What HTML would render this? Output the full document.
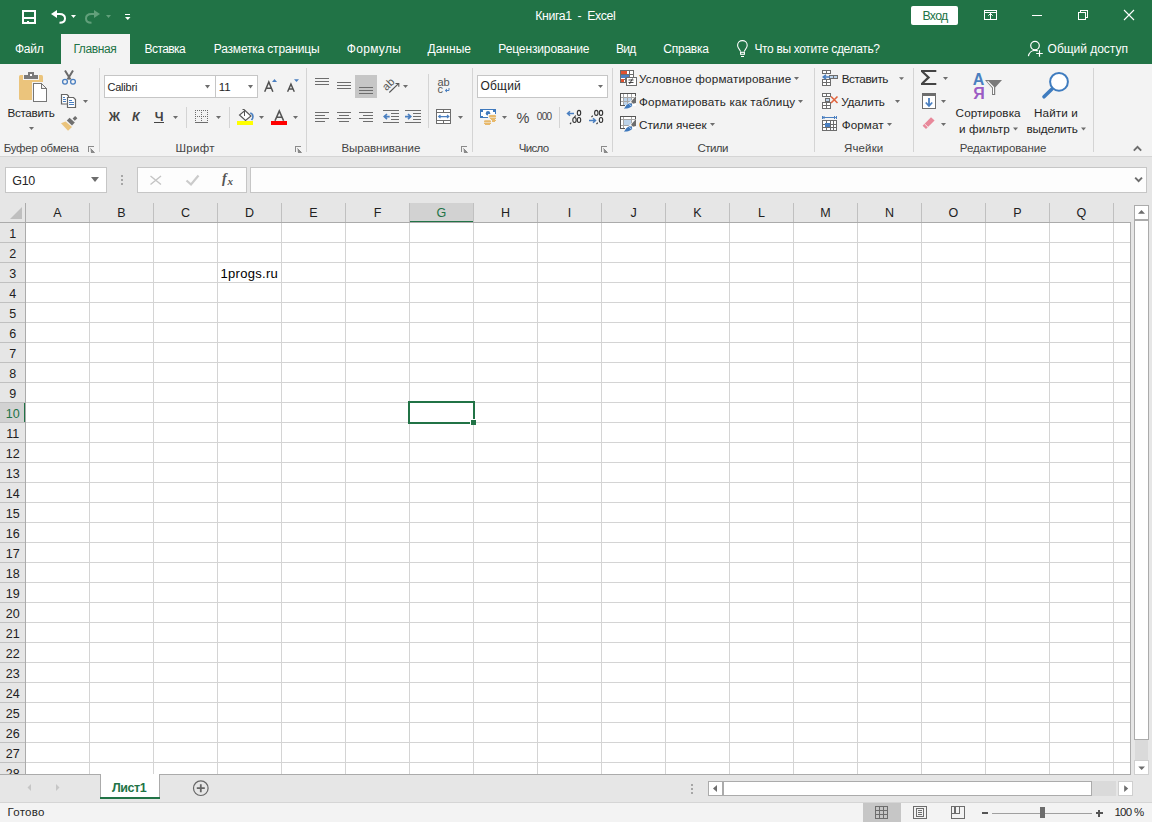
<!DOCTYPE html>
<html><head><meta charset="utf-8"><style>
html,body{margin:0;padding:0;}
body{width:1152px;height:822px;overflow:hidden;position:relative;background:#fff;font-family:"Liberation Sans",sans-serif;}
span{position:absolute;white-space:pre;font-family:"Liberation Sans",sans-serif;}
svg{position:absolute;left:0;top:0;}
</style></head><body>
<div style="position:absolute;left:0px;top:0px;width:1152px;height:64px;background:#217346;"></div><div style="position:absolute;left:0px;top:64px;width:1152px;height:92px;background:#f3f3f3;"></div><div style="position:absolute;left:61px;top:34px;width:69px;height:30px;background:#f3f3f3;"></div><div style="position:absolute;left:0px;top:156px;width:1152px;height:1px;background:#d5d5d5;"></div><div style="position:absolute;left:0px;top:157px;width:1152px;height:46px;background:#e6e6e6;"></div><div style="position:absolute;left:0px;top:203px;width:1131px;height:571px;background:#ffffff;"></div><div style="position:absolute;left:1131px;top:203px;width:21px;height:571px;background:#e6e6e6;"></div><div style="position:absolute;left:0px;top:774px;width:1152px;height:28px;background:#e6e6e6;"></div><div style="position:absolute;left:0px;top:803px;width:1152px;height:19px;background:#f3f3f3;"></div><div style="position:absolute;left:0px;top:203px;width:1131px;height:19px;background:#e6e6e6;"></div><div style="position:absolute;left:0px;top:223px;width:25px;height:551px;background:#e6e6e6;"></div><div style="position:absolute;left:409px;top:203px;width:64px;height:19px;background:#d2d2d2;"></div><div style="position:absolute;left:0px;top:402px;width:24px;height:20px;background:#d2d2d2;"></div><div style="position:absolute;left:409px;top:221px;width:65px;height:2px;background:#217346;"></div><div style="position:absolute;left:24px;top:402px;width:2px;height:21px;background:#217346;"></div><div style="position:absolute;left:5px;top:167px;width:102px;height:26px;background:#fff;box-sizing:border-box;border:1px solid #c6c6c6;"></div><div style="position:absolute;left:121px;top:175px;width:2px;height:2px;background:#a6a6a6;"></div><div style="position:absolute;left:121px;top:179px;width:2px;height:2px;background:#a6a6a6;"></div><div style="position:absolute;left:121px;top:183px;width:2px;height:2px;background:#a6a6a6;"></div><div style="position:absolute;left:137px;top:167px;width:110px;height:26px;background:#fdfdfd;box-sizing:border-box;border:1px solid #c6c6c6;"></div><div style="position:absolute;left:250px;top:167px;width:897px;height:26px;background:#fdfdfd;box-sizing:border-box;border:1px solid #c6c6c6;"></div><div style="position:absolute;left:0px;top:802px;width:1152px;height:1px;background:#d5d5d5;"></div><div style="position:absolute;left:100px;top:774px;width:60px;height:23px;background:#ababab;"></div><div style="position:absolute;left:101px;top:774px;width:58px;height:23px;background:#fff;"></div><div style="position:absolute;left:100px;top:797px;width:60px;height:2px;background:#217346;"></div><div style="position:absolute;left:911px;top:6px;width:47px;height:19px;background:#fff;border-radius:2px;"></div><div style="position:absolute;left:104px;top:75px;width:154px;height:23px;background:#fff;box-sizing:border-box;border:1px solid #c6c6c6;"></div><div style="position:absolute;left:215px;top:75px;width:1px;height:23px;background:#c6c6c6;"></div><div style="position:absolute;left:477px;top:75px;width:131px;height:23px;background:#fff;box-sizing:border-box;border:1px solid #c6c6c6;"></div>
<svg width="1152" height="822" viewBox="0 0 1152 822" shape-rendering="crispEdges">
<line x1="89.5" y1="223" x2="89.5" y2="774" stroke="#d4d4d4" stroke-width="1"/><line x1="153.5" y1="223" x2="153.5" y2="774" stroke="#d4d4d4" stroke-width="1"/><line x1="217.5" y1="223" x2="217.5" y2="774" stroke="#d4d4d4" stroke-width="1"/><line x1="281.5" y1="223" x2="281.5" y2="774" stroke="#d4d4d4" stroke-width="1"/><line x1="345.5" y1="223" x2="345.5" y2="774" stroke="#d4d4d4" stroke-width="1"/><line x1="409.5" y1="223" x2="409.5" y2="774" stroke="#d4d4d4" stroke-width="1"/><line x1="473.5" y1="223" x2="473.5" y2="774" stroke="#d4d4d4" stroke-width="1"/><line x1="537.5" y1="223" x2="537.5" y2="774" stroke="#d4d4d4" stroke-width="1"/><line x1="601.5" y1="223" x2="601.5" y2="774" stroke="#d4d4d4" stroke-width="1"/><line x1="665.5" y1="223" x2="665.5" y2="774" stroke="#d4d4d4" stroke-width="1"/><line x1="729.5" y1="223" x2="729.5" y2="774" stroke="#d4d4d4" stroke-width="1"/><line x1="793.5" y1="223" x2="793.5" y2="774" stroke="#d4d4d4" stroke-width="1"/><line x1="857.5" y1="223" x2="857.5" y2="774" stroke="#d4d4d4" stroke-width="1"/><line x1="921.5" y1="223" x2="921.5" y2="774" stroke="#d4d4d4" stroke-width="1"/><line x1="985.5" y1="223" x2="985.5" y2="774" stroke="#d4d4d4" stroke-width="1"/><line x1="1049.5" y1="223" x2="1049.5" y2="774" stroke="#d4d4d4" stroke-width="1"/><line x1="1113.5" y1="223" x2="1113.5" y2="774" stroke="#d4d4d4" stroke-width="1"/><line x1="26" y1="242.5" x2="1130" y2="242.5" stroke="#d4d4d4" stroke-width="1"/><line x1="26" y1="262.5" x2="1130" y2="262.5" stroke="#d4d4d4" stroke-width="1"/><line x1="26" y1="282.5" x2="1130" y2="282.5" stroke="#d4d4d4" stroke-width="1"/><line x1="26" y1="302.5" x2="1130" y2="302.5" stroke="#d4d4d4" stroke-width="1"/><line x1="26" y1="322.5" x2="1130" y2="322.5" stroke="#d4d4d4" stroke-width="1"/><line x1="26" y1="342.5" x2="1130" y2="342.5" stroke="#d4d4d4" stroke-width="1"/><line x1="26" y1="362.5" x2="1130" y2="362.5" stroke="#d4d4d4" stroke-width="1"/><line x1="26" y1="382.5" x2="1130" y2="382.5" stroke="#d4d4d4" stroke-width="1"/><line x1="26" y1="402.5" x2="1130" y2="402.5" stroke="#d4d4d4" stroke-width="1"/><line x1="26" y1="422.5" x2="1130" y2="422.5" stroke="#d4d4d4" stroke-width="1"/><line x1="26" y1="442.5" x2="1130" y2="442.5" stroke="#d4d4d4" stroke-width="1"/><line x1="26" y1="462.5" x2="1130" y2="462.5" stroke="#d4d4d4" stroke-width="1"/><line x1="26" y1="482.5" x2="1130" y2="482.5" stroke="#d4d4d4" stroke-width="1"/><line x1="26" y1="502.5" x2="1130" y2="502.5" stroke="#d4d4d4" stroke-width="1"/><line x1="26" y1="522.5" x2="1130" y2="522.5" stroke="#d4d4d4" stroke-width="1"/><line x1="26" y1="542.5" x2="1130" y2="542.5" stroke="#d4d4d4" stroke-width="1"/><line x1="26" y1="562.5" x2="1130" y2="562.5" stroke="#d4d4d4" stroke-width="1"/><line x1="26" y1="582.5" x2="1130" y2="582.5" stroke="#d4d4d4" stroke-width="1"/><line x1="26" y1="602.5" x2="1130" y2="602.5" stroke="#d4d4d4" stroke-width="1"/><line x1="26" y1="622.5" x2="1130" y2="622.5" stroke="#d4d4d4" stroke-width="1"/><line x1="26" y1="642.5" x2="1130" y2="642.5" stroke="#d4d4d4" stroke-width="1"/><line x1="26" y1="662.5" x2="1130" y2="662.5" stroke="#d4d4d4" stroke-width="1"/><line x1="26" y1="682.5" x2="1130" y2="682.5" stroke="#d4d4d4" stroke-width="1"/><line x1="26" y1="702.5" x2="1130" y2="702.5" stroke="#d4d4d4" stroke-width="1"/><line x1="26" y1="722.5" x2="1130" y2="722.5" stroke="#d4d4d4" stroke-width="1"/><line x1="26" y1="742.5" x2="1130" y2="742.5" stroke="#d4d4d4" stroke-width="1"/><line x1="26" y1="762.5" x2="1130" y2="762.5" stroke="#d4d4d4" stroke-width="1"/><line x1="89.5" y1="203" x2="89.5" y2="222" stroke="#c0c0c0" stroke-width="1"/><line x1="153.5" y1="203" x2="153.5" y2="222" stroke="#c0c0c0" stroke-width="1"/><line x1="217.5" y1="203" x2="217.5" y2="222" stroke="#c0c0c0" stroke-width="1"/><line x1="281.5" y1="203" x2="281.5" y2="222" stroke="#c0c0c0" stroke-width="1"/><line x1="345.5" y1="203" x2="345.5" y2="222" stroke="#c0c0c0" stroke-width="1"/><line x1="409.5" y1="203" x2="409.5" y2="222" stroke="#c0c0c0" stroke-width="1"/><line x1="473.5" y1="203" x2="473.5" y2="222" stroke="#c0c0c0" stroke-width="1"/><line x1="537.5" y1="203" x2="537.5" y2="222" stroke="#c0c0c0" stroke-width="1"/><line x1="601.5" y1="203" x2="601.5" y2="222" stroke="#c0c0c0" stroke-width="1"/><line x1="665.5" y1="203" x2="665.5" y2="222" stroke="#c0c0c0" stroke-width="1"/><line x1="729.5" y1="203" x2="729.5" y2="222" stroke="#c0c0c0" stroke-width="1"/><line x1="793.5" y1="203" x2="793.5" y2="222" stroke="#c0c0c0" stroke-width="1"/><line x1="857.5" y1="203" x2="857.5" y2="222" stroke="#c0c0c0" stroke-width="1"/><line x1="921.5" y1="203" x2="921.5" y2="222" stroke="#c0c0c0" stroke-width="1"/><line x1="985.5" y1="203" x2="985.5" y2="222" stroke="#c0c0c0" stroke-width="1"/><line x1="1049.5" y1="203" x2="1049.5" y2="222" stroke="#c0c0c0" stroke-width="1"/><line x1="1113.5" y1="203" x2="1113.5" y2="222" stroke="#c0c0c0" stroke-width="1"/><line x1="0" y1="242.5" x2="25" y2="242.5" stroke="#c0c0c0" stroke-width="1"/><line x1="0" y1="262.5" x2="25" y2="262.5" stroke="#c0c0c0" stroke-width="1"/><line x1="0" y1="282.5" x2="25" y2="282.5" stroke="#c0c0c0" stroke-width="1"/><line x1="0" y1="302.5" x2="25" y2="302.5" stroke="#c0c0c0" stroke-width="1"/><line x1="0" y1="322.5" x2="25" y2="322.5" stroke="#c0c0c0" stroke-width="1"/><line x1="0" y1="342.5" x2="25" y2="342.5" stroke="#c0c0c0" stroke-width="1"/><line x1="0" y1="362.5" x2="25" y2="362.5" stroke="#c0c0c0" stroke-width="1"/><line x1="0" y1="382.5" x2="25" y2="382.5" stroke="#c0c0c0" stroke-width="1"/><line x1="0" y1="402.5" x2="25" y2="402.5" stroke="#c0c0c0" stroke-width="1"/><line x1="0" y1="422.5" x2="25" y2="422.5" stroke="#c0c0c0" stroke-width="1"/><line x1="0" y1="442.5" x2="25" y2="442.5" stroke="#c0c0c0" stroke-width="1"/><line x1="0" y1="462.5" x2="25" y2="462.5" stroke="#c0c0c0" stroke-width="1"/><line x1="0" y1="482.5" x2="25" y2="482.5" stroke="#c0c0c0" stroke-width="1"/><line x1="0" y1="502.5" x2="25" y2="502.5" stroke="#c0c0c0" stroke-width="1"/><line x1="0" y1="522.5" x2="25" y2="522.5" stroke="#c0c0c0" stroke-width="1"/><line x1="0" y1="542.5" x2="25" y2="542.5" stroke="#c0c0c0" stroke-width="1"/><line x1="0" y1="562.5" x2="25" y2="562.5" stroke="#c0c0c0" stroke-width="1"/><line x1="0" y1="582.5" x2="25" y2="582.5" stroke="#c0c0c0" stroke-width="1"/><line x1="0" y1="602.5" x2="25" y2="602.5" stroke="#c0c0c0" stroke-width="1"/><line x1="0" y1="622.5" x2="25" y2="622.5" stroke="#c0c0c0" stroke-width="1"/><line x1="0" y1="642.5" x2="25" y2="642.5" stroke="#c0c0c0" stroke-width="1"/><line x1="0" y1="662.5" x2="25" y2="662.5" stroke="#c0c0c0" stroke-width="1"/><line x1="0" y1="682.5" x2="25" y2="682.5" stroke="#c0c0c0" stroke-width="1"/><line x1="0" y1="702.5" x2="25" y2="702.5" stroke="#c0c0c0" stroke-width="1"/><line x1="0" y1="722.5" x2="25" y2="722.5" stroke="#c0c0c0" stroke-width="1"/><line x1="0" y1="742.5" x2="25" y2="742.5" stroke="#c0c0c0" stroke-width="1"/><line x1="0" y1="762.5" x2="25" y2="762.5" stroke="#c0c0c0" stroke-width="1"/><line x1="0" y1="222.5" x2="1131" y2="222.5" stroke="#ababab" stroke-width="1"/><line x1="25.5" y1="203" x2="25.5" y2="774" stroke="#ababab" stroke-width="1"/><line x1="1130.5" y1="222" x2="1130.5" y2="774" stroke="#ababab" stroke-width="1"/><polygon points="22,207 22,219 10,219" fill="#bfbfbf" shape-rendering="geometricPrecision"/><rect x="409" y="402" width="65" height="21" fill="none" stroke="#217346" stroke-width="2" /><rect x="470" y="419" width="6" height="6" fill="#fff"/><rect x="471" y="420" width="5" height="5" fill="#217346"/><polygon points="91,177 99,177 95,182" fill="#6d6d6d" shape-rendering="geometricPrecision"/><path d="M150.5,176 L161,184.5 M161,176 L150.5,184.5" stroke="#c4c4c4" stroke-width="1.4" fill="none" shape-rendering="geometricPrecision"/><path d="M186.5,180.5 L191,184.5 L198.5,175.5" stroke="#cbcbcb" stroke-width="2.2" fill="none" shape-rendering="geometricPrecision"/><path d="M1135.2,177.6 L1138.6,181.2 L1142,177.6" stroke="#6d6d6d" stroke-width="1.9" fill="none" shape-rendering="geometricPrecision"/><line x1="0" y1="774.5" x2="101" y2="774.5" stroke="#ababab" stroke-width="1"/><line x1="159" y1="774.5" x2="1131" y2="774.5" stroke="#ababab" stroke-width="1"/><polygon points="31,784 31,791 27.5,787.5" fill="#c6c6c6" shape-rendering="geometricPrecision"/><polygon points="56,784 56,791 59.5,787.5" fill="#c6c6c6" shape-rendering="geometricPrecision"/><circle cx="200.8" cy="788.2" r="7.3" fill="none" stroke="#666" stroke-width="1.2" shape-rendering="geometricPrecision"/><path d="M196.8,788.2 H204.8 M200.8,784.2 V792.2" stroke="#666" stroke-width="1.8" shape-rendering="geometricPrecision"/><path d="M23,11 H35 V23 H23 Z" fill="none" stroke="#fff" stroke-width="2" shape-rendering="geometricPrecision"/><path d="M24,18 H34" stroke="#fff" stroke-width="2" shape-rendering="geometricPrecision"/><rect x="27" y="21" width="2" height="2" fill="#fff"/><polygon points="51,14 57,10 57,18" fill="#fff" shape-rendering="geometricPrecision"/><path d="M55.5,14 H59.5 C63,14 65,16 65,18.5 C65,21 63,22.8 59.5,22.8" fill="none" stroke="#fff" stroke-width="2" shape-rendering="geometricPrecision"/><polygon points="71,15 76,15 73.5,18" fill="#fff" shape-rendering="geometricPrecision"/><polygon points="100,14 94,10 94,18" fill="#62a07b" shape-rendering="geometricPrecision"/><path d="M95.5,14 H91.5 C88,14 86,16 86,18.5 C86,21 88,22.8 91.5,22.8" fill="none" stroke="#62a07b" stroke-width="2" shape-rendering="geometricPrecision"/><polygon points="106,15 111,15 108.5,18" fill="#62a07b" shape-rendering="geometricPrecision"/><rect x="125" y="13.5" width="5" height="1.5" fill="#fff"/><polygon points="125,17 130.5,17 127.75,20" fill="#fff" shape-rendering="geometricPrecision"/><rect x="984.5" y="10.5" width="12" height="9" fill="none" stroke="#fff" stroke-width="1"/><path d="M985,12.5 H996 M990.5,13 V20" stroke="#fff" stroke-width="1"/><path d="M988.3,15.7 L990.5,13.5 L992.7,15.7" fill="none" stroke="#fff" stroke-width="1" shape-rendering="geometricPrecision"/><rect x="1032" y="15" width="10" height="1" fill="#fff"/><rect x="1078.5" y="12.5" width="7" height="7" fill="none" stroke="#fff"/><path d="M1080.5,12.5 V10.5 H1087.5 V17.5 H1085.5" fill="none" stroke="#fff"/><path d="M1124,10 L1134,20 M1134,10 L1124,20" stroke="#fff" stroke-width="1.1" shape-rendering="geometricPrecision"/><circle cx="1035" cy="45.6" r="4.3" fill="none" stroke="#fff" stroke-width="1.2" shape-rendering="geometricPrecision"/><path d="M1028.4,56.2 C1029,52.5 1032,50.3 1035,50.3 C1036,50.3 1037,50.5 1037.8,50.9" fill="none" stroke="#fff" stroke-width="1.2" shape-rendering="geometricPrecision"/><path d="M1036.2,53.5 H1042.8 M1039.5,50.2 V56.8" stroke="#fff" stroke-width="1.2" shape-rendering="geometricPrecision"/><path d="M740.6,51.6 L739,48.8 C738,47.6 737.6,46.5 737.6,45.2 C737.6,42.6 739.7,40.6 742.4,40.6 C745.1,40.6 747.2,42.6 747.2,45.2 C747.2,46.5 746.8,47.6 745.8,48.8 L744.2,51.6" fill="none" stroke="#fff" stroke-width="1.1" shape-rendering="geometricPrecision"/><rect x="740.6" y="52.3" width="3.8" height="2" fill="none" stroke="#fff" stroke-width="1.1" shape-rendering="geometricPrecision"/><rect x="741" y="56" width="3" height="1" fill="#fff"/><rect x="19" y="75" width="24" height="25" rx="1.5" fill="#ebc47c" shape-rendering="geometricPrecision"/><rect x="23" y="73" width="16" height="7" fill="#f3f3f3"/><rect x="24" y="75" width="14" height="4" fill="#7a7a7a"/><rect x="28" y="72" width="6" height="4" fill="#7a7a7a"/><rect x="30" y="74" width="2" height="2" fill="#fff"/><rect x="32" y="82" width="16" height="22" fill="#f3f3f3"/><path d="M33.5,83.5 H41.5 L46.5,88.5 V101.5 H33.5 Z" fill="#fff" stroke="#767676" stroke-width="1"/><path d="M41.5,83.5 V88.5 H46.5" fill="none" stroke="#767676" stroke-width="1"/><polygon points="41.5,84 46,88 41.5,88" fill="#f0f0f0"/><polygon points="29,127 34,127 31.5,130" fill="#6d6d6d" shape-rendering="geometricPrecision"/><path d="M65,70.5 L70.5,79.5 M73,70.5 L67.5,79.5" stroke="#6a6a6a" stroke-width="2" shape-rendering="geometricPrecision"/><circle cx="65" cy="81.8" r="2.4" fill="none" stroke="#4a7fc0" stroke-width="1.3" shape-rendering="geometricPrecision"/><circle cx="73" cy="81.8" r="2.4" fill="none" stroke="#4a7fc0" stroke-width="1.3" shape-rendering="geometricPrecision"/><path d="M61.5,94.5 H67 L68.5,96 V104 H61.5 Z" fill="#fff" stroke="#666" stroke-width="1.2" shape-rendering="geometricPrecision"/><path d="M67.5,97.5 H73.5 L75.5,99.5 V107.5 H67.5 Z" fill="#fff" stroke="#666" stroke-width="1.2" shape-rendering="geometricPrecision"/><rect x="63" y="96.8" width="2" height="1" fill="#4a7fc0"/><rect x="63" y="99.0" width="3" height="1" fill="#4a7fc0"/><rect x="63" y="100.9" width="3" height="1" fill="#4a7fc0"/><rect x="69" y="99.8" width="2.5" height="1" fill="#4a7fc0"/><rect x="69" y="102.0" width="5" height="1" fill="#4a7fc0"/><rect x="69" y="103.9" width="5" height="1" fill="#4a7fc0"/><polygon points="83,100 88,100 85.5,103" fill="#6d6d6d" shape-rendering="geometricPrecision"/><polygon points="61,123.2 65.6,121.4 72,127 68,130.7" fill="#ebc47c" shape-rendering="geometricPrecision"/><polygon points="66.8,120.6 69.6,117.8 74.8,122.6 72,125.4" fill="#6f6f6f" shape-rendering="geometricPrecision"/><polygon points="72.6,118.6 75.2,116 77.4,118.2 74.8,120.8" fill="#6f6f6f" shape-rendering="geometricPrecision"/><path d="M88.5,152 V146.5 H94" fill="none" stroke="#8a8a8a" stroke-width="1"/><polygon points="90.5,148.5 95,153 91,153" fill="#8a8a8a" shape-rendering="geometricPrecision"/><path d="M90.5,148.5 L94.5,152.5" stroke="#8a8a8a" stroke-width="1" shape-rendering="geometricPrecision"/><path d="M295.5,152 V146.5 H301" fill="none" stroke="#8a8a8a" stroke-width="1"/><polygon points="297.5,148.5 302,153 298,153" fill="#8a8a8a" shape-rendering="geometricPrecision"/><path d="M297.5,148.5 L301.5,152.5" stroke="#8a8a8a" stroke-width="1" shape-rendering="geometricPrecision"/><path d="M461.5,152 V146.5 H467" fill="none" stroke="#8a8a8a" stroke-width="1"/><polygon points="463.5,148.5 468,153 464,153" fill="#8a8a8a" shape-rendering="geometricPrecision"/><path d="M463.5,148.5 L467.5,152.5" stroke="#8a8a8a" stroke-width="1" shape-rendering="geometricPrecision"/><path d="M601.5,152 V146.5 H607" fill="none" stroke="#8a8a8a" stroke-width="1"/><polygon points="603.5,148.5 608,153 604,153" fill="#8a8a8a" shape-rendering="geometricPrecision"/><path d="M603.5,148.5 L607.5,152.5" stroke="#8a8a8a" stroke-width="1" shape-rendering="geometricPrecision"/><rect x="99" y="68" width="1" height="84" fill="#d4d4d4"/><rect x="306" y="68" width="1" height="84" fill="#d4d4d4"/><rect x="472" y="68" width="1" height="84" fill="#d4d4d4"/><rect x="612" y="68" width="1" height="84" fill="#d4d4d4"/><rect x="814" y="68" width="1" height="84" fill="#d4d4d4"/><rect x="913" y="68" width="1" height="84" fill="#d4d4d4"/><rect x="1093" y="68" width="1" height="84" fill="#d4d4d4"/><path d="M1133.8,150.6 L1137.5,146.9 L1141.2,150.6" fill="none" stroke="#6d6d6d" stroke-width="1.9" shape-rendering="geometricPrecision"/><polygon points="205,85 210,85 207.5,88.4" fill="#6d6d6d" shape-rendering="geometricPrecision"/><polygon points="248,85 253,85 250.5,88.4" fill="#6d6d6d" shape-rendering="geometricPrecision"/><path d="M264.7,91.8 L268.8,82 L272.9,91.8 M266.2,88.3 H271.4" fill="none" stroke="#505050" stroke-width="1.5" shape-rendering="geometricPrecision"/><polygon points="272,82 277,82 274.5,79" fill="#4a7fc0" shape-rendering="geometricPrecision"/><path d="M287.6,91.8 L290.95,84.1 L294.3,91.8 M288.9,89 H293" fill="none" stroke="#505050" stroke-width="1.4" shape-rendering="geometricPrecision"/><polygon points="294,79.2 299,79.2 296.5,82" fill="#4a7fc0" shape-rendering="geometricPrecision"/><rect x="154" y="122" width="10" height="1.2" fill="#444"/><polygon points="173,116 178,116 175.5,119" fill="#6d6d6d" shape-rendering="geometricPrecision"/><rect x="186" y="107" width="1" height="21" fill="#d4d4d4"/><rect x="229" y="107" width="1" height="21" fill="#d4d4d4"/><rect x="195" y="110" width="1" height="1" fill="#6d6d6d"/><rect x="197" y="110" width="1" height="1" fill="#6d6d6d"/><rect x="199" y="110" width="1" height="1" fill="#6d6d6d"/><rect x="201" y="110" width="1" height="1" fill="#6d6d6d"/><rect x="203" y="110" width="1" height="1" fill="#6d6d6d"/><rect x="205" y="110" width="1" height="1" fill="#6d6d6d"/><rect x="207" y="110" width="1" height="1" fill="#6d6d6d"/><rect x="195" y="116" width="1" height="1" fill="#6d6d6d"/><rect x="197" y="116" width="1" height="1" fill="#6d6d6d"/><rect x="199" y="116" width="1" height="1" fill="#6d6d6d"/><rect x="201" y="116" width="1" height="1" fill="#6d6d6d"/><rect x="203" y="116" width="1" height="1" fill="#6d6d6d"/><rect x="205" y="116" width="1" height="1" fill="#6d6d6d"/><rect x="207" y="116" width="1" height="1" fill="#6d6d6d"/><rect x="195" y="110" width="1" height="1" fill="#6d6d6d"/><rect x="195" y="112" width="1" height="1" fill="#6d6d6d"/><rect x="195" y="114" width="1" height="1" fill="#6d6d6d"/><rect x="195" y="116" width="1" height="1" fill="#6d6d6d"/><rect x="195" y="118" width="1" height="1" fill="#6d6d6d"/><rect x="195" y="120" width="1" height="1" fill="#6d6d6d"/><rect x="201" y="110" width="1" height="1" fill="#6d6d6d"/><rect x="201" y="112" width="1" height="1" fill="#6d6d6d"/><rect x="201" y="114" width="1" height="1" fill="#6d6d6d"/><rect x="201" y="116" width="1" height="1" fill="#6d6d6d"/><rect x="201" y="118" width="1" height="1" fill="#6d6d6d"/><rect x="201" y="120" width="1" height="1" fill="#6d6d6d"/><rect x="207" y="110" width="1" height="1" fill="#6d6d6d"/><rect x="207" y="112" width="1" height="1" fill="#6d6d6d"/><rect x="207" y="114" width="1" height="1" fill="#6d6d6d"/><rect x="207" y="116" width="1" height="1" fill="#6d6d6d"/><rect x="207" y="118" width="1" height="1" fill="#6d6d6d"/><rect x="207" y="120" width="1" height="1" fill="#6d6d6d"/><rect x="195" y="122" width="13" height="1.2" fill="#6d6d6d"/><polygon points="216,116 221,116 218.5,119" fill="#6d6d6d" shape-rendering="geometricPrecision"/><polygon points="245,110.5 251,116 245.5,120.5 239.5,115" fill="#fff" stroke="#555" stroke-width="1.1" shape-rendering="geometricPrecision"/><path d="M242.5,109.5 H244.5 V116" fill="none" stroke="#555" stroke-width="1" shape-rendering="geometricPrecision"/><path d="M250.2,113 C252.5,113.5 253.6,115.5 252.6,118.5 L251.5,120" fill="none" stroke="#4a7fc0" stroke-width="1.6" shape-rendering="geometricPrecision"/><rect x="237" y="121" width="16" height="4" fill="#ffff00"/><polygon points="259,116 264,116 261.5,119" fill="#6d6d6d" shape-rendering="geometricPrecision"/><path d="M275,120.8 L279.3,111 L283.6,120.8 M276.6,117.2 H282" fill="none" stroke="#555" stroke-width="1.6" shape-rendering="geometricPrecision"/><rect x="271" y="121" width="16" height="4" fill="#ff0000"/><polygon points="293,116 298,116 295.5,119" fill="#6d6d6d" shape-rendering="geometricPrecision"/><rect x="315" y="77.5" width="14" height="1.1" fill="#6d6d6d"/><rect x="315" y="80.6" width="14" height="1.1" fill="#6d6d6d"/><rect x="315" y="83.8" width="14" height="1.1" fill="#6d6d6d"/><rect x="337" y="82" width="14" height="1.1" fill="#6d6d6d"/><rect x="337" y="85" width="14" height="1.1" fill="#6d6d6d"/><rect x="337" y="88.2" width="14" height="1.1" fill="#6d6d6d"/><rect x="355" y="75" width="22" height="23" fill="#c6c6c6"/><rect x="359" y="87" width="14" height="1.1" fill="#6d6d6d"/><rect x="359" y="90" width="14" height="1.1" fill="#6d6d6d"/><rect x="359" y="93.2" width="14" height="1.1" fill="#6d6d6d"/><path d="M389.3,92.5 L398.8,83.3" stroke="#555" stroke-width="1.1" shape-rendering="geometricPrecision"/><path d="M395.5,83.5 H398.8 V86.8" fill="none" stroke="#555" stroke-width="1.1" shape-rendering="geometricPrecision"/><polygon points="403,85 408,85 405.5,88" fill="#6d6d6d" shape-rendering="geometricPrecision"/><rect x="315" y="111.5" width="14" height="1.1" fill="#6d6d6d"/><rect x="337" y="111.5" width="14" height="1.1" fill="#6d6d6d"/><rect x="359" y="111.5" width="14" height="1.1" fill="#6d6d6d"/><rect x="315" y="114.6" width="10" height="1.1" fill="#6d6d6d"/><rect x="339" y="114.6" width="10" height="1.1" fill="#6d6d6d"/><rect x="363" y="114.6" width="10" height="1.1" fill="#6d6d6d"/><rect x="315" y="117.8" width="14" height="1.1" fill="#6d6d6d"/><rect x="337" y="117.8" width="14" height="1.1" fill="#6d6d6d"/><rect x="359" y="117.8" width="14" height="1.1" fill="#6d6d6d"/><rect x="315" y="121" width="10" height="1.1" fill="#6d6d6d"/><rect x="339" y="121" width="10" height="1.1" fill="#6d6d6d"/><rect x="363" y="121" width="10" height="1.1" fill="#6d6d6d"/><rect x="383" y="109.8" width="16" height="1.1" fill="#6d6d6d"/><rect x="405" y="109.8" width="16" height="1.1" fill="#6d6d6d"/><rect x="383" y="121.9" width="16" height="1.1" fill="#6d6d6d"/><rect x="405" y="121.9" width="16" height="1.1" fill="#6d6d6d"/><rect x="391" y="113" width="8" height="1.1" fill="#6d6d6d"/><rect x="413" y="113" width="8" height="1.1" fill="#6d6d6d"/><rect x="391" y="116.1" width="8" height="1.1" fill="#6d6d6d"/><rect x="413" y="116.1" width="8" height="1.1" fill="#6d6d6d"/><rect x="391" y="119" width="8" height="1.1" fill="#6d6d6d"/><rect x="413" y="119" width="8" height="1.1" fill="#6d6d6d"/><path d="M389.7,116.6 H384.5 M387,114 L384.2,116.6 L387,119.2" fill="none" stroke="#4a7fc0" stroke-width="1.6" shape-rendering="geometricPrecision"/><path d="M405,116.6 H410.5 M408,114 L410.8,116.6 L408,119.2" fill="none" stroke="#4a7fc0" stroke-width="1.6" shape-rendering="geometricPrecision"/><rect x="428" y="74" width="1" height="54" fill="#d4d4d4"/><path d="M449,88 V90.5 H445.5 M447,89 L445.2,90.5 L447,92" fill="none" stroke="#4a7fc0" stroke-width="1" shape-rendering="geometricPrecision"/><rect x="436.5" y="109.5" width="14" height="14" fill="#fff" stroke="#6d6d6d" stroke-width="1"/><path d="M437,112.5 H450 M437,120.5 H450 M443.5,110 V112.5 M443.5,120.5 V123" stroke="#6d6d6d" stroke-width="1"/><path d="M438.5,116.6 H449 M440.5,115 L438.6,116.6 L440.5,118.2 M447,115 L448.9,116.6 L447,118.2" fill="none" stroke="#4a7fc0" stroke-width="1.1" shape-rendering="geometricPrecision"/><polygon points="458,116 463,116 460.5,119" fill="#6d6d6d" shape-rendering="geometricPrecision"/><polygon points="598,85 603,85 600.5,88" fill="#6d6d6d" shape-rendering="geometricPrecision"/><rect x="480" y="109" width="16" height="9" fill="#3f79bd"/><polygon points="483,110 493,110 493,111.5 495,111.5 495,115.5 493,115.5 493,117 483,117 483,115.5 481,115.5 481,111.5 483,111.5" fill="#fff"/><circle cx="488" cy="113.3" r="2.2" fill="#3f79bd" shape-rendering="geometricPrecision"/><rect x="488" y="114" width="9" height="11" fill="#f3f3f3"/><rect x="489" y="115" width="7" height="2.6" rx="1.2" fill="#e8b96b" shape-rendering="geometricPrecision"/><rect x="489.5" y="118" width="6.5" height="0.9" fill="#e8b96b"/><rect x="491" y="119.2" width="4" height="1" fill="#e8b96b"/><rect x="489.5" y="120.3" width="6.5" height="0.9" fill="#e8b96b"/><rect x="491.5" y="121.4" width="3.5" height="1" fill="#e8b96b"/><rect x="483" y="119.5" width="9" height="6" fill="#f3f3f3"/><rect x="484" y="120.2" width="7" height="2.4" rx="1.2" fill="#e8b96b" shape-rendering="geometricPrecision"/><rect x="484.3" y="123.2" width="6.4" height="0.9" fill="#e8b96b"/><rect x="485" y="124.2" width="5" height="1" fill="#e8b96b"/><polygon points="502,116 507,116 504.5,119" fill="#6d6d6d" shape-rendering="geometricPrecision"/><rect x="559" y="107" width="1" height="21" fill="#d4d4d4"/><ellipse cx="579" cy="112.9" rx="1.7" ry="2.5" fill="none" stroke="#333" stroke-width="1.1" shape-rendering="geometricPrecision"/><ellipse cx="574.5" cy="120" rx="1.7" ry="2.5" fill="none" stroke="#333" stroke-width="1.1" shape-rendering="geometricPrecision"/><ellipse cx="579" cy="120" rx="1.7" ry="2.5" fill="none" stroke="#333" stroke-width="1.1" shape-rendering="geometricPrecision"/><path d="M571.2,122.6 L570,124.19999999999999" stroke="#333" stroke-width="1.1" shape-rendering="geometricPrecision"/><path d="M575.7,115.5 L574.5,117.1" stroke="#333" stroke-width="1.1" shape-rendering="geometricPrecision"/><path d="M574,113.5 H567.5 M570,111.2 L567.5,113.5 L570,115.8" fill="none" stroke="#4a7fc0" stroke-width="1.5" shape-rendering="geometricPrecision"/><ellipse cx="596.3" cy="112.9" rx="1.7" ry="2.5" fill="none" stroke="#333" stroke-width="1.1" shape-rendering="geometricPrecision"/><ellipse cx="601" cy="112.9" rx="1.7" ry="2.5" fill="none" stroke="#333" stroke-width="1.1" shape-rendering="geometricPrecision"/><path d="M592.7,115.6 L591.5,117.19999999999999" stroke="#333" stroke-width="1.1" shape-rendering="geometricPrecision"/><ellipse cx="601" cy="120" rx="1.7" ry="2.5" fill="none" stroke="#333" stroke-width="1.1" shape-rendering="geometricPrecision"/><path d="M597.7,122.6 L596.5,124.19999999999999" stroke="#333" stroke-width="1.1" shape-rendering="geometricPrecision"/><path d="M589,120.5 H595.5 M593,118.2 L595.5,120.5 L593,122.8" fill="none" stroke="#4a7fc0" stroke-width="1.5" shape-rendering="geometricPrecision"/><rect x="620.5" y="70.5" width="13" height="12" fill="#fff" stroke="#6d6d6d" stroke-width="1"/><rect x="625" y="70" width="1" height="13" fill="#6d6d6d"/><rect x="629" y="70" width="1" height="13" fill="#6d6d6d"/><rect x="620" y="74" width="14" height="1" fill="#6d6d6d"/><rect x="620" y="79" width="14" height="1" fill="#6d6d6d"/><rect x="621" y="71" width="6" height="3" fill="#e0522f"/><rect x="621" y="75" width="8" height="3" fill="#4a7fc0"/><rect x="621" y="79" width="3" height="3" fill="#e0522f"/><rect x="626.5" y="77" width="9.5" height="8.5" fill="#fff" stroke="#6d6d6d" stroke-width="1"/><path d="M628.5,80 H633.5 M628.5,82.5 H633.5 M632.5,78.5 L629.5,84" stroke="#333" stroke-width="0.9" shape-rendering="geometricPrecision"/><rect x="620" y="93" width="16" height="13" fill="#fff"/><rect x="624" y="98" width="7" height="7" fill="#bcd3ea"/><rect x="623" y="93" width="1" height="13" fill="#a6a6a6"/><rect x="627" y="93" width="1" height="13" fill="#a6a6a6"/><rect x="631" y="93" width="1" height="13" fill="#a6a6a6"/><rect x="620" y="97" width="16" height="1" fill="#a6a6a6"/><rect x="620" y="101" width="16" height="1" fill="#a6a6a6"/><path d="M620.5,106 V93.5 H635.5 V95.5" fill="none" stroke="#555" stroke-width="1"/><path d="M620.5,105.5 H624.5" fill="none" stroke="#555" stroke-width="1"/><polygon points="637,95 637,97 628,106.5 624.5,106.5" fill="#f3f3f3" shape-rendering="geometricPrecision"/><polygon points="636,96 636,103 633,103.7 631.2,101.4" fill="#6d6d6d" shape-rendering="geometricPrecision"/><path d="M624,108.7 C625.5,106 627,104 629,103.4 C631,102.9 632.6,104 632.2,105.6 C631.6,107.6 628,108.7 624,108.7 Z" fill="#3f79bd" shape-rendering="geometricPrecision"/><path d="M629.6,104.4 L631,105.8" stroke="#fff" stroke-width="0.9" shape-rendering="geometricPrecision"/><rect x="620" y="116" width="16" height="13" fill="#fff"/><rect x="624" y="120" width="7" height="5" fill="#bcd3ea"/><rect x="623" y="116" width="1" height="13" fill="#a6a6a6"/><rect x="631" y="116" width="1" height="13" fill="#a6a6a6"/><rect x="620" y="119" width="16" height="1" fill="#a6a6a6"/><rect x="620" y="125" width="16" height="1" fill="#a6a6a6"/><path d="M620.5,129 V116.5 H635.5 V118.5" fill="none" stroke="#555" stroke-width="1"/><path d="M620.5,128.5 H624.5" fill="none" stroke="#555" stroke-width="1"/><polygon points="637,118 637,120 628,129.5 624.5,129.5" fill="#f3f3f3" shape-rendering="geometricPrecision"/><polygon points="636,119 636,126 633,126.7 631.2,124.4" fill="#6d6d6d" shape-rendering="geometricPrecision"/><path d="M624,131.7 C625.5,129 627,127 629,126.4 C631,125.9 632.6,127 632.2,128.6 C631.6,130.6 628,131.7 624,131.7 Z" fill="#3f79bd" shape-rendering="geometricPrecision"/><path d="M629.6,127.4 L631,128.8" stroke="#fff" stroke-width="0.9" shape-rendering="geometricPrecision"/><polygon points="794,77 799,77 796.5,80" fill="#6d6d6d" shape-rendering="geometricPrecision"/><polygon points="798,100 803,100 800.5,103" fill="#6d6d6d" shape-rendering="geometricPrecision"/><polygon points="710,123 715,123 712.5,126" fill="#6d6d6d" shape-rendering="geometricPrecision"/><rect x="822.5" y="70.5" width="8" height="3" fill="#fff" stroke="#6d6d6d" stroke-width="1"/><rect x="826" y="70" width="1" height="4" fill="#6d6d6d"/><rect x="822" y="70" width="9" height="4" fill="none"/><rect x="829.5" y="75.5" width="8" height="3" fill="#bcd3ea" stroke="#6d6d6d" stroke-width="1"/><rect x="833" y="75" width="1" height="4" fill="#6d6d6d"/><rect x="822.5" y="79.5" width="8" height="6" fill="#fff" stroke="#6d6d6d" stroke-width="1"/><rect x="826" y="79" width="1" height="7" fill="#6d6d6d"/><rect x="822" y="82" width="9" height="1" fill="#6d6d6d"/><path d="M830,77 H823.5 M826,74.8 L823.2,77 L826,79.2" fill="none" stroke="#4a7fc0" stroke-width="1.5" shape-rendering="geometricPrecision"/><polygon points="899,77.2 904,77.2 901.5,80" fill="#6d6d6d" shape-rendering="geometricPrecision"/><rect x="822.5" y="93.5" width="8" height="3" fill="#fff" stroke="#6d6d6d" stroke-width="1"/><rect x="826" y="93" width="1" height="4" fill="#6d6d6d"/><rect x="825.5" y="98.5" width="4" height="3" fill="#bcd3ea" stroke="#6d6d6d" stroke-width="1"/><rect x="822.5" y="102.5" width="8" height="6" fill="#fff" stroke="#6d6d6d" stroke-width="1"/><rect x="826" y="102" width="1" height="7" fill="#6d6d6d"/><rect x="822" y="105" width="9" height="1" fill="#6d6d6d"/><path d="M831,96.5 L837.5,103 M837.5,96.5 L831,103" stroke="#e0653f" stroke-width="1.6" shape-rendering="geometricPrecision"/><polygon points="895,100 900,100 897.5,103" fill="#6d6d6d" shape-rendering="geometricPrecision"/><path d="M823,117.5 H835.5 M824.5,116 L823,117.5 L824.5,119 M834,116 L835.5,117.5 L834,119" fill="none" stroke="#4a7fc0" stroke-width="1" shape-rendering="geometricPrecision"/><rect x="822" y="116" width="1" height="3" fill="#4a7fc0"/><rect x="835.5" y="116" width="1" height="3" fill="#4a7fc0"/><rect x="822.5" y="120.5" width="14" height="10" fill="#fff" stroke="#6d6d6d" stroke-width="1"/><rect x="826" y="120" width="1" height="11" fill="#6d6d6d"/><rect x="830" y="120" width="1" height="11" fill="#6d6d6d"/><rect x="833" y="120" width="1" height="11" fill="#6d6d6d"/><rect x="822" y="124" width="15" height="1" fill="#6d6d6d"/><rect x="822" y="127" width="15" height="1" fill="#6d6d6d"/><rect x="825" y="123" width="5" height="4" fill="#4a7fc0"/><polygon points="887,123 892,123 889.5,126" fill="#6d6d6d" shape-rendering="geometricPrecision"/><path d="M921,71 H936.3 M921,84 H936.3 M922.2,71.5 L928.6,77.4 L922.2,83.5" fill="none" stroke="#444" stroke-width="2.2" shape-rendering="geometricPrecision"/><polygon points="943,77 948,77 945.5,80" fill="#6d6d6d" shape-rendering="geometricPrecision"/><rect x="922.5" y="93.5" width="13" height="15" fill="#fff" stroke="#6d6d6d" stroke-width="1"/><rect x="922" y="93" width="14" height="3" fill="#6d6d6d"/><path d="M929,98 V105.5 M925.8,102.5 L929,106 L932.2,102.5" fill="none" stroke="#4a7fc0" stroke-width="1.8" shape-rendering="geometricPrecision"/><polygon points="941,100 946,100 943.5,103" fill="#6d6d6d" shape-rendering="geometricPrecision"/><polygon points="922.6,125.8 931,117.3 934.6,120.6 926,129" fill="#e8889a" shape-rendering="geometricPrecision"/><path d="M924.5,123.8 L928.2,127.3" stroke="#f3f3f3" stroke-width="0.9" shape-rendering="geometricPrecision"/><polygon points="941,123 946,123 943.5,126" fill="#6d6d6d" shape-rendering="geometricPrecision"/><path d="M985,80 H1002 L995.2,87.5 V95 H992 V88 Z" fill="#7a7a7a" shape-rendering="geometricPrecision"/><path d="M987.6,81.2 L993.5,87.3 V94" fill="none" stroke="#fff" stroke-width="1.1" shape-rendering="geometricPrecision"/><polygon points="1013,127.5 1018,127.5 1015.5,130.6" fill="#6d6d6d" shape-rendering="geometricPrecision"/><circle cx="1059" cy="81.8" r="8.9" fill="#fff" stroke="#3f7cbf" stroke-width="2" shape-rendering="geometricPrecision"/><path d="M1044,96.8 L1052,89" stroke="#3f7cbf" stroke-width="3.6" stroke-linecap="round" shape-rendering="geometricPrecision"/><polygon points="1081,127.5 1086,127.5 1083.5,130.6" fill="#6d6d6d" shape-rendering="geometricPrecision"/><rect x="1134.5" y="205.5" width="14" height="14" fill="#fff" stroke="#ababab"/><polygon points="1138,213.75 1145,213.75 1141.5,210.1" fill="#6d6d6d" shape-rendering="geometricPrecision"/><rect x="1134.5" y="220.5" width="14" height="519" fill="#fff" stroke="#ababab"/><rect x="1135" y="740" width="13" height="20" fill="#dadada"/><rect x="1134.5" y="760.5" width="14" height="14" fill="#fff" stroke="#cfcfcf"/><polygon points="1138.3,766.5 1145,766.5 1141.65,770.1" fill="#6d6d6d" shape-rendering="geometricPrecision"/><rect x="691" y="784" width="2" height="2" fill="#a6a6a6"/><rect x="691" y="788" width="2" height="2" fill="#a6a6a6"/><rect x="691" y="792" width="2" height="2" fill="#a6a6a6"/><rect x="708.5" y="781.5" width="14" height="14" fill="#fff" stroke="#ababab"/><polygon points="717,785 717,792 713,788.5" fill="#6d6d6d" shape-rendering="geometricPrecision"/><rect x="723.5" y="781.5" width="368" height="14" fill="#fff" stroke="#ababab"/><rect x="1092" y="781" width="24" height="15" fill="#dadada"/><rect x="1118.5" y="781.5" width="14" height="14" fill="#fff" stroke="#cfcfcf"/><polygon points="1124.2,785.2 1124.2,792 1128.2,788.6" fill="#6d6d6d" shape-rendering="geometricPrecision"/><rect x="863" y="803" width="38" height="19" fill="#c6c6c6"/><rect x="875.5" y="806.5" width="12" height="12" fill="none" stroke="#6d6d6d" stroke-width="1.5"/><path d="M879.5,806 V819 M883.5,806 V819 M875,810.5 H888 M875,814.5 H888" stroke="#6d6d6d" stroke-width="1.2"/><rect x="913.5" y="806.5" width="13" height="12" fill="none" stroke="#6d6d6d" stroke-width="1.4"/><rect x="916.5" y="808.5" width="7" height="8" fill="none" stroke="#6d6d6d" stroke-width="1"/><path d="M918,810.5 H922 M918,812.5 H922 M918,814.5 H922" stroke="#6d6d6d" stroke-width="1"/><rect x="951.5" y="806.5" width="13" height="12" fill="none" stroke="#6d6d6d" stroke-width="1.4"/><path d="M955,806 V813.5 M952,813.5 H959.5 V806" fill="none" stroke="#6d6d6d" stroke-width="1.2"/><rect x="982" y="812" width="6" height="2" fill="#555"/><rect x="992" y="813" width="100" height="1" fill="#a0a0a0"/><rect x="1040" y="807" width="5" height="11" fill="#6d6d6d"/><path d="M1095.5,813 H1102.8 M1099.1,809.5 V816.6" stroke="#555" stroke-width="1.6"/>
</svg>
<span style="left:53.31px;top:204px;font-size:12.5px;line-height:18px;color:#212121;letter-spacing:0.000px;">A</span><span style="left:117.34px;top:204px;font-size:12.5px;line-height:18px;color:#212121;letter-spacing:0.000px;">B</span><span style="left:181.00px;top:204px;font-size:12.5px;line-height:18px;color:#212121;letter-spacing:0.000px;">C</span><span style="left:245.00px;top:204px;font-size:12.5px;line-height:18px;color:#212121;letter-spacing:0.000px;">D</span><span style="left:309.34px;top:204px;font-size:12.5px;line-height:18px;color:#212121;letter-spacing:0.000px;">E</span><span style="left:373.69px;top:204px;font-size:12.5px;line-height:18px;color:#212121;letter-spacing:0.000px;">F</span><span style="left:436.62px;top:204px;font-size:12.5px;line-height:18px;color:#217346;letter-spacing:0.000px;">G</span><span style="left:501.00px;top:204px;font-size:12.5px;line-height:18px;color:#212121;letter-spacing:0.000px;">H</span><span style="left:567.75px;top:204px;font-size:12.5px;line-height:18px;color:#212121;letter-spacing:0.000px;">I</span><span style="left:630.38px;top:204px;font-size:12.5px;line-height:18px;color:#212121;letter-spacing:0.000px;">J</span><span style="left:693.34px;top:204px;font-size:12.5px;line-height:18px;color:#212121;letter-spacing:0.000px;">K</span><span style="left:758.03px;top:204px;font-size:12.5px;line-height:18px;color:#212121;letter-spacing:0.000px;">L</span><span style="left:820.28px;top:204px;font-size:12.5px;line-height:18px;color:#212121;letter-spacing:0.000px;">M</span><span style="left:885.00px;top:204px;font-size:12.5px;line-height:18px;color:#212121;letter-spacing:0.000px;">N</span><span style="left:948.62px;top:204px;font-size:12.5px;line-height:18px;color:#212121;letter-spacing:0.000px;">O</span><span style="left:1013.34px;top:204px;font-size:12.5px;line-height:18px;color:#212121;letter-spacing:0.000px;">P</span><span style="left:1076.62px;top:204px;font-size:12.5px;line-height:18px;color:#212121;letter-spacing:0.000px;">Q</span><div style="position:absolute;left:0;top:223px;width:25px;height:551px;overflow:hidden;"><div style="position:absolute;left:0;top:-223px;"><span style="left:9.33px;top:225px;font-size:12.5px;line-height:18px;color:#212121;letter-spacing:0.000px;">1</span><span style="left:9.33px;top:245px;font-size:12.5px;line-height:18px;color:#212121;letter-spacing:0.000px;">2</span><span style="left:9.33px;top:265px;font-size:12.5px;line-height:18px;color:#212121;letter-spacing:0.000px;">3</span><span style="left:9.33px;top:285px;font-size:12.5px;line-height:18px;color:#212121;letter-spacing:0.000px;">4</span><span style="left:9.33px;top:305px;font-size:12.5px;line-height:18px;color:#212121;letter-spacing:0.000px;">5</span><span style="left:9.33px;top:325px;font-size:12.5px;line-height:18px;color:#212121;letter-spacing:0.000px;">6</span><span style="left:9.33px;top:345px;font-size:12.5px;line-height:18px;color:#212121;letter-spacing:0.000px;">7</span><span style="left:9.33px;top:365px;font-size:12.5px;line-height:18px;color:#212121;letter-spacing:0.000px;">8</span><span style="left:9.33px;top:385px;font-size:12.5px;line-height:18px;color:#212121;letter-spacing:0.000px;">9</span><span style="left:5.86px;top:405px;font-size:12.5px;line-height:18px;color:#217346;letter-spacing:0.000px;">10</span><span style="left:6.30px;top:425px;font-size:12.5px;line-height:18px;color:#212121;letter-spacing:0.000px;">11</span><span style="left:5.86px;top:445px;font-size:12.5px;line-height:18px;color:#212121;letter-spacing:0.000px;">12</span><span style="left:5.86px;top:465px;font-size:12.5px;line-height:18px;color:#212121;letter-spacing:0.000px;">13</span><span style="left:5.86px;top:485px;font-size:12.5px;line-height:18px;color:#212121;letter-spacing:0.000px;">14</span><span style="left:5.86px;top:505px;font-size:12.5px;line-height:18px;color:#212121;letter-spacing:0.000px;">15</span><span style="left:5.86px;top:525px;font-size:12.5px;line-height:18px;color:#212121;letter-spacing:0.000px;">16</span><span style="left:5.86px;top:545px;font-size:12.5px;line-height:18px;color:#212121;letter-spacing:0.000px;">17</span><span style="left:5.86px;top:565px;font-size:12.5px;line-height:18px;color:#212121;letter-spacing:0.000px;">18</span><span style="left:5.86px;top:585px;font-size:12.5px;line-height:18px;color:#212121;letter-spacing:0.000px;">19</span><span style="left:5.86px;top:605px;font-size:12.5px;line-height:18px;color:#212121;letter-spacing:0.000px;">20</span><span style="left:5.86px;top:625px;font-size:12.5px;line-height:18px;color:#212121;letter-spacing:0.000px;">21</span><span style="left:5.86px;top:645px;font-size:12.5px;line-height:18px;color:#212121;letter-spacing:0.000px;">22</span><span style="left:5.86px;top:665px;font-size:12.5px;line-height:18px;color:#212121;letter-spacing:0.000px;">23</span><span style="left:5.86px;top:685px;font-size:12.5px;line-height:18px;color:#212121;letter-spacing:0.000px;">24</span><span style="left:5.86px;top:705px;font-size:12.5px;line-height:18px;color:#212121;letter-spacing:0.000px;">25</span><span style="left:5.86px;top:725px;font-size:12.5px;line-height:18px;color:#212121;letter-spacing:0.000px;">26</span><span style="left:5.86px;top:745px;font-size:12.5px;line-height:18px;color:#212121;letter-spacing:0.000px;">27</span><span style="left:5.86px;top:765px;font-size:12.5px;line-height:18px;color:#212121;letter-spacing:0.000px;">28</span></div></div><span style="left:220.50px;top:265px;font-size:13px;line-height:18px;color:#000;letter-spacing:0.297px;">1progs.ru</span><span style="left:12.20px;top:172px;font-size:12.5px;line-height:18px;color:#262626;letter-spacing:-0.262px;">G10</span><span style="left:222px;top:171px;font:italic bold 14px/16px 'Liberation Serif';color:#555">f</span><span style="left:227.5px;top:174px;font:italic bold 11px/14px 'Liberation Serif';color:#555">x</span><span style="left:112.00px;top:779px;font-size:12.5px;line-height:18px;color:#217346;letter-spacing:-0.475px;font-weight:bold;">Лист1</span><span style="left:7.60px;top:804px;font-size:11.5px;line-height:16px;color:#262626;letter-spacing:0.253px;">Готово</span><span style="left:535.30px;top:8px;font-size:12.3px;line-height:17px;color:#ffffff;letter-spacing:-0.406px;">Книга1  -  Excel</span><span style="left:922.50px;top:8px;font-size:12.3px;line-height:17px;color:#217346;letter-spacing:-0.700px;">Вход</span><span style="left:1047.60px;top:41px;font-size:12px;line-height:17px;color:#ffffff;letter-spacing:-0.031px;">Общий доступ</span><span style="left:15.00px;top:41px;font-size:12px;line-height:17px;color:#ffffff;letter-spacing:-0.257px;">Файл</span><span style="left:73.40px;top:41px;font-size:12px;line-height:17px;color:#217346;letter-spacing:-0.393px;">Главная</span><span style="left:144.60px;top:41px;font-size:12px;line-height:17px;color:#ffffff;letter-spacing:-0.607px;">Вставка</span><span style="left:213.80px;top:41px;font-size:12px;line-height:17px;color:#ffffff;letter-spacing:-0.190px;">Разметка страницы</span><span style="left:346.70px;top:41px;font-size:12px;line-height:17px;color:#ffffff;letter-spacing:0.333px;">Формулы</span><span style="left:427.50px;top:41px;font-size:12px;line-height:17px;color:#ffffff;letter-spacing:0.024px;">Данные</span><span style="left:498.30px;top:41px;font-size:12px;line-height:17px;color:#ffffff;letter-spacing:-0.118px;">Рецензирование</span><span style="left:616.00px;top:41px;font-size:12px;line-height:17px;color:#ffffff;letter-spacing:-0.700px;">Вид</span><span style="left:663.30px;top:41px;font-size:12px;line-height:17px;color:#ffffff;letter-spacing:-0.250px;">Справка</span><span style="left:754.40px;top:41px;font-size:12px;line-height:17px;color:#ffffff;letter-spacing:-0.336px;">Что вы хотите сделать?</span><span style="left:7.50px;top:105px;font-size:11.7px;line-height:16px;color:#262626;letter-spacing:-0.330px;">Вставить</span><span style="left:3.70px;top:140px;font-size:11.5px;line-height:16px;color:#444444;letter-spacing:-0.264px;">Буфер обмена</span><span style="left:175.60px;top:140px;font-size:11.5px;line-height:16px;color:#444444;letter-spacing:0.241px;">Шрифт</span><span style="left:341.40px;top:140px;font-size:11.5px;line-height:16px;color:#444444;letter-spacing:-0.025px;">Выравнивание</span><span style="left:518.70px;top:140px;font-size:11.5px;line-height:16px;color:#444444;letter-spacing:-0.641px;">Число</span><span style="left:697.60px;top:140px;font-size:11.5px;line-height:16px;color:#444444;letter-spacing:-0.580px;">Стили</span><span style="left:844.00px;top:140px;font-size:11.5px;line-height:16px;color:#444444;letter-spacing:0.143px;">Ячейки</span><span style="left:959.80px;top:140px;font-size:11.5px;line-height:16px;color:#444444;letter-spacing:-0.072px;">Редактирование</span><span style="left:639.00px;top:71px;font-size:11.7px;line-height:16px;color:#262626;letter-spacing:0.163px;">Условное форматирование</span><span style="left:639.00px;top:94px;font-size:11.7px;line-height:16px;color:#262626;letter-spacing:0.170px;">Форматировать как таблицу</span><span style="left:639.00px;top:117px;font-size:11.7px;line-height:16px;color:#262626;letter-spacing:0.017px;">Стили ячеек</span><span style="left:841.70px;top:71px;font-size:11.7px;line-height:16px;color:#262626;letter-spacing:-0.401px;">Вставить</span><span style="left:841.25px;top:94px;font-size:11.7px;line-height:16px;color:#262626;letter-spacing:-0.157px;">Удалить</span><span style="left:841.70px;top:117px;font-size:11.7px;line-height:16px;color:#262626;letter-spacing:0.073px;">Формат</span><span style="left:955.60px;top:105px;font-size:11.7px;line-height:16px;color:#262626;letter-spacing:0.096px;">Сортировка</span><span style="left:959.00px;top:121px;font-size:11.7px;line-height:16px;color:#262626;letter-spacing:0.151px;">и фильтр</span><span style="left:1034.00px;top:105px;font-size:11.7px;line-height:16px;color:#262626;letter-spacing:0.121px;">Найти и</span><span style="left:1026.40px;top:121px;font-size:11.7px;line-height:16px;color:#262626;letter-spacing:-0.131px;">выделить</span><span style="left:107.40px;top:80px;font-size:11px;line-height:15px;color:#262626;letter-spacing:-0.197px;">Calibri</span><span style="left:218.80px;top:79px;font-size:11.5px;line-height:16px;color:#262626;letter-spacing:0.000px;">11</span><span style="left:480.50px;top:78px;font-size:12px;line-height:17px;color:#262626;letter-spacing:0.205px;">Общий</span><span style="left:1114.40px;top:804px;font-size:11.5px;line-height:16px;color:#262626;letter-spacing:-0.700px;">100 %</span><span style="left:108.76px;top:108px;font-size:12.5px;line-height:18px;color:#444;letter-spacing:0.000px;font-weight:bold;">Ж</span><span style="left:132.10px;top:108px;font-size:12.5px;line-height:18px;color:#444;letter-spacing:0.000px;font-weight:bold;font-style:italic;">К</span><span style="left:154.70px;top:108px;font-size:12.5px;line-height:18px;color:#444;letter-spacing:0.000px;font-weight:bold;">Ч</span><span style="left:382px;top:77px;font-size:11px;line-height:14px;color:#555;transform:rotate(-45deg);transform-origin:50% 50%;">ab</span><span style="left:437.5px;top:77px;font-size:11px;line-height:11px;color:#555;">ab</span><span style="left:437.5px;top:84px;font-size:11px;line-height:11px;color:#555;">c</span><span style="left:516.60px;top:108px;font-size:14.5px;line-height:20px;color:#444;letter-spacing:0.000px;">%</span><span style="left:536.80px;top:110px;font-size:10px;line-height:14px;color:#444;letter-spacing:-0.700px;">000</span><span style="left:972.7px;top:71px;font-size:16px;line-height:17px;color:#4a7fc0;font-weight:bold;">A</span><span style="left:973.3px;top:85px;font-size:16px;line-height:17px;color:#9b5cc4;font-weight:bold;">Я</span>
</body></html>
